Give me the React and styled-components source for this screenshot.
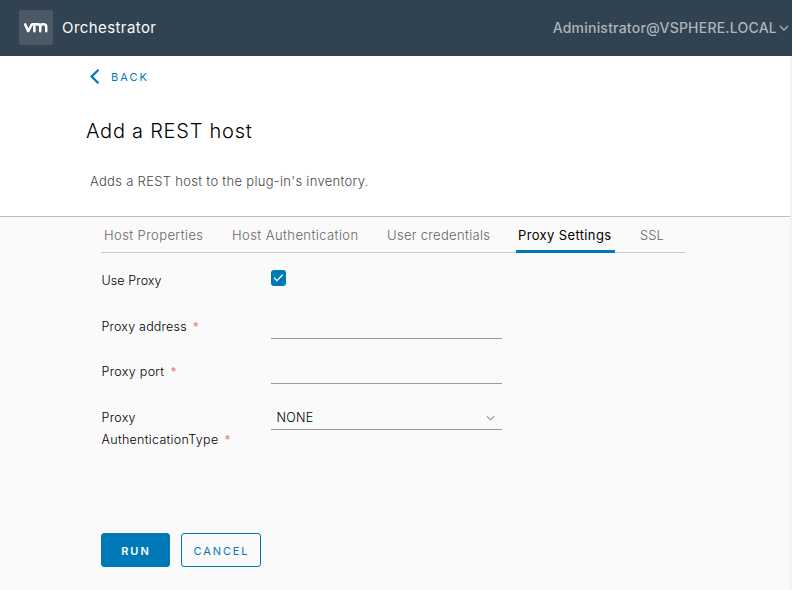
import React from "react";
import styled, { createGlobalStyle } from "styled-components";

const GlobalStyle = createGlobalStyle`
  *, *::before, *::after { box-sizing: border-box; }
  body { margin: 0; background: #fafafa; font-family: Inter, "Open Sans", sans-serif; }
  button, input { font-family: inherit; }
`;

const Page = styled.div`
  width: 792px;
  height: 590px;
  overflow: hidden;
  display: flex;
  flex-direction: column;
  background: #fafafa;
`;

const Header = styled.header`
  height: 56px;
  flex: none;
  display: flex;
  align-items: center;
  padding: 0 3px 0 19px;
  background: #314351;
  color: #fafafa;
`;

const Logo = styled.div`
  width: 34px;
  height: 35px;
  margin: 0 9px 1px 0;
  border-radius: 3px;
  background: #4b5966;
  svg { display: block; }
`;

const Product = styled.span`
  flex: 1;
  font-size: 15px;
  letter-spacing: 0.42px;
  line-height: 20px;
`;

const Account = styled.button`
  display: flex;
  align-items: center;
  padding: 0;
  border: 0;
  background: none;
  color: #adb4b9;
  font-size: 14px;
  font-weight: 450;
  line-height: 20px;
  letter-spacing: 0.22px;
  white-space: nowrap;
  svg { margin-left: 2px; }
`;

const Body = styled.main`
  flex: 1;
  border-right: 2px solid #f2f2f2;
`;

const Intro = styled.section`
  height: 161px;
  padding: 10px 0 0 86px;
  border-bottom: 1px solid #bdbdbd;
  background: #fff;
`;

const BackLink = styled.button`
  display: flex;
  align-items: center;
  height: 22px;
  padding: 0 0 0 3px;
  border: 0;
  background: none;
  color: #0079b8;
  font-size: 11px;
  letter-spacing: 2px;
  svg { margin: -1px 10px 0 0; }
`;

const Title = styled.h1`
  margin: 28px 0 25px;
  color: #000;
  font-size: 20px;
  font-weight: 300;
  line-height: 30px;
  letter-spacing: 0.75px;
`;

const Description = styled.p`
  margin: 0 0 0 4px;
  color: #484848;
  font-size: 13px;
  font-weight: 300;
  line-height: 21px;
  letter-spacing: 0.3px;
`;

const Tabs = styled.nav`
  display: grid;
  grid-template-columns: 128px 155px 131px 122px auto;
  width: 584px;
  height: 36px;
  margin-left: 101px;
  padding-left: 1px;
  border-bottom: 1px solid #ccc;
`;

const Tab = styled.button`
  justify-self: start;
  height: 36px;
  padding: 1px 3px 0 2px;
  border: 0;
  background: none;
  color: ${(p) => (p.$active ? "#000" : "#666")};
  box-shadow: ${(p) => (p.$active ? "inset 0 -3px #0079b8" : "none")};
  font-size: 13px;
  font-weight: ${(p) => (p.$active ? 400 : 300)};
  line-height: 35px;
  letter-spacing: ${(p) => p.$tracking}px;
  white-space: nowrap;
`;

const Form = styled.form`
  padding: 17px 0 0 101px;
`;

const Field = styled.div`
  display: grid;
  grid-template-columns: 170px 231px;
  align-items: start;
  height: ${(p) => p.$height}px;
`;

const Label = styled.label`
  width: 140px;
  padding-left: 0.5px;
  color: #000;
  font-size: 12.5px;
  font-weight: 300;
  line-height: 22px;
  letter-spacing: ${(p) => p.$tracking}px;
`;

const Required = styled.span`
  margin-left: 6px;
  color: #dc8a72;
  font-size: 11.5px;
  font-weight: 500;
  line-height: 12px;
`;

const Checkbox = styled.span`
  display: flex;
  width: 15px;
  height: 16px;
  border-radius: 3px;
  background: #0079b8;
`;

const TextInput = styled.input`
  width: 231px;
  height: 23px;
  padding: 0 6px;
  border: 0;
  border-bottom: 1px solid #999;
  background: none;
  outline: 0;
`;

const Select = styled.div`
  display: flex;
  align-items: center;
  justify-content: space-between;
  height: 23px;
  padding: 0 7px 0 5.5px;
  border-bottom: 1px solid #999;
  color: #000;
  font-size: 12.5px;
  font-weight: 300;
  line-height: 22px;
  letter-spacing: 0.3px;
`;

const Actions = styled.div`
  display: flex;
  gap: 11px;
`;

const Button = styled.button`
  width: ${(p) => (p.$primary ? 69 : 80)}px;
  height: 34px;
  padding: 2px 0 0 1px;
  border: 1px solid #0079b8;
  border-radius: 3px;
  background: ${(p) => (p.$primary ? "#0079b8" : "transparent")};
  color: ${(p) => (p.$primary ? "#fff" : "#0079b8")};
  font-size: 11px;
  font-weight: ${(p) => (p.$primary ? 600 : 400)};
  letter-spacing: ${(p) => (p.$primary ? 2 : 1.9)}px;
`;

const tabs = [
  { name: "Host Properties", tracking: 0.41 },
  { name: "Host Authentication", tracking: 0.43 },
  { name: "User credentials", tracking: 0.32 },
  { name: "Proxy Settings", tracking: 0.37, active: true },
  { name: "SSL", tracking: 0 },
];

function VmLogo() {
  return (
    <svg width="34" height="35" viewBox="0 -0.4 34 35" fill="none" stroke="#fff" strokeWidth="2.5" strokeLinecap="round" strokeLinejoin="round">
      <path d="M6.2 14 L9.2 20.8 L12.4 14.6 Q12.9 13.8 14 13.8 H18.6 Q21.2 13.8 21.2 16.3 V20.8" />
      <path d="M15.4 20.8 V14.2 M21.2 16.3 Q21.2 13.8 23.6 13.8 H24.4 Q27.2 13.8 27.2 16.3 V20.8" />
    </svg>
  );
}

function Chevron({ width, height, color, weight }) {
  return (
    <svg width={width} height={height} viewBox="0 0 10 6" fill="none" stroke={color} strokeWidth={weight}>
      <path d="M1 1 L5 5 L9 1" />
    </svg>
  );
}

export default function App() {
  return (
    <Page>
      <GlobalStyle />
      <Header>
        <Logo><VmLogo /></Logo>
        <Product>Orchestrator</Product>
        <Account type="button">
          Administrator@VSPHERE.LOCAL
          <Chevron width={10} height={6} color="#adb4b9" weight={1.3} />
        </Account>
      </Header>
      <Body>
        <Intro>
          <BackLink type="button">
            <svg width="12" height="17" viewBox="0 0 12 17" fill="none" stroke="#0079b8" strokeWidth="2.3">
              <path d="M9.5 1.7 L2.6 8.5 L9.5 15.3" />
            </svg>
            BACK
          </BackLink>
          <Title>Add a REST host</Title>
          <Description>Adds a REST host to the plug-in's inventory.</Description>
        </Intro>
        <Tabs>
          {tabs.map((t) => (
            <Tab key={t.name} type="button" $active={t.active} $tracking={t.tracking}>{t.name}</Tab>
          ))}
        </Tabs>
        <Form>
          <Field $height={46}>
            <Label $tracking={0.1}>Use Proxy</Label>
            <Checkbox role="checkbox" aria-checked="true" aria-label="Use Proxy">
              <svg width="15" height="16" viewBox="0 0 15 16" fill="none" stroke="#fff" strokeWidth="1.3">
                <path d="M3 7.7 L6 10.6 L11.6 4.8" />
              </svg>
            </Checkbox>
          </Field>
          <Field $height={45}>
            <Label $tracking={0.2}>Proxy address<Required>*</Required></Label>
            <TextInput aria-label="Proxy address" />
          </Field>
          <Field $height={46}>
            <Label $tracking={0.32}>Proxy port<Required>*</Required></Label>
            <TextInput aria-label="Proxy port" />
          </Field>
          <Field $height={126}>
            <Label $tracking={0.3}>Proxy AuthenticationType<Required>*</Required></Label>
            <Select>
              <span>NONE</span>
              <Chevron width={9} height={6} color="#9a9a9a" weight={1.3} />
            </Select>
          </Field>
          <Actions>
            <Button type="button" $primary>RUN</Button>
            <Button type="button">CANCEL</Button>
          </Actions>
        </Form>
      </Body>
    </Page>
  );
}
